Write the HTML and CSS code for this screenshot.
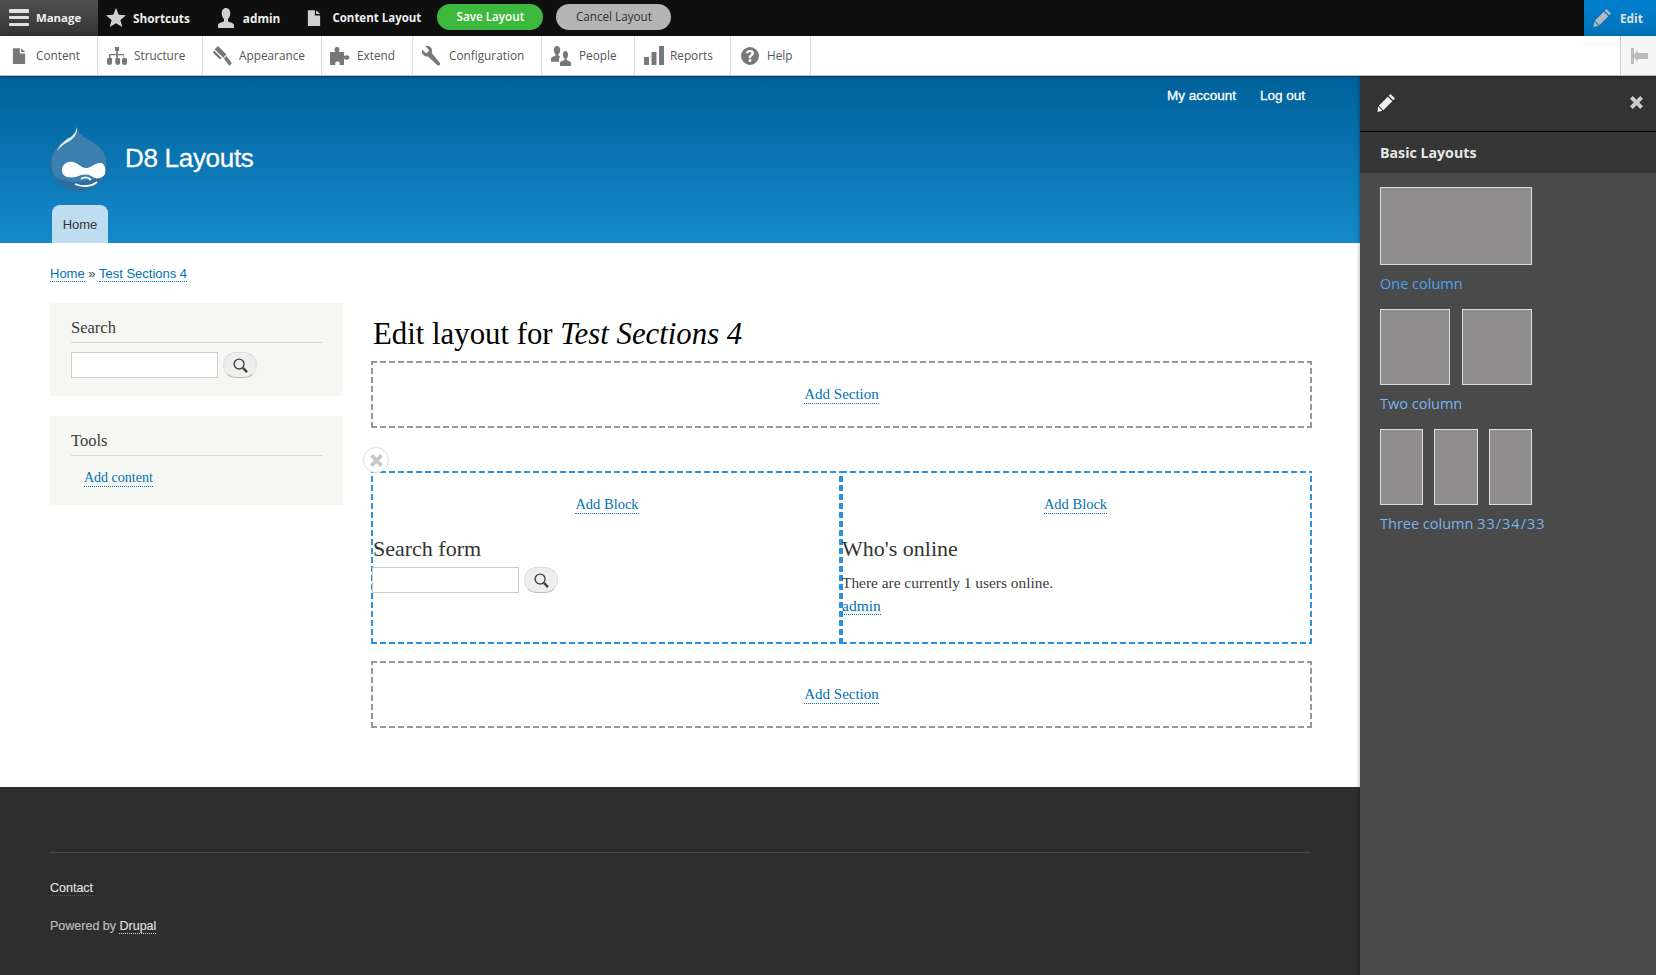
FILE: index.html
```html
<!DOCTYPE html>
<html lang="en">
<head>
<meta charset="utf-8">
<title>Edit layout for Test Sections 4 | D8 Layouts</title>
<link rel="stylesheet" href="styles.css">
</head>
<body>
<svg class="defs" width="0" height="0" aria-hidden="true">
  <symbol id="i-file" viewBox="0 0 16 20"><path d="M1 1h8v6h6v12H1z M10.500 1l4.500 4.500h-4.500z"/></symbol>
  <symbol id="i-star" viewBox="0 0 20 20"><path d="M10 0l2.700 6.800 7.300.5-5.600 4.700 1.800 7.100L10 15.200l-6.200 3.900 1.800-7.100L0 7.300l7.300-.5z"/></symbol>
  <symbol id="i-user" viewBox="0 0 20 20"><path d="M10 0c2.800 0 4.300 2.300 4.300 5.300 0 2.300-.9 4.700-2.300 5.800v1.900c0 1.200 6 1.600 6 4.200V20H2v-2.800c0-2.600 6-3 6-4.200v-1.900C6.600 10 5.700 7.600 5.700 5.300 5.700 2.300 7.200 0 10 0z"/></symbol>
  <symbol id="i-tree" viewBox="0 0 20 20"><path d="M8 1h4v4h-1.200v3H17v4h1.500a1.500 1.500 0 0 1 1.500 1.500v3a2.400 2.400 0 0 1-5 0v-3a1.500 1.500 0 0 1 1.500-1.500V9.300h-5.700V12h1.200a1.500 1.500 0 0 1 1.200 1.500v3a2.400 2.400 0 0 1-4.900 0v-3A1.500 1.500 0 0 1 9.200 12V9.300H3.500V12H5a1.500 1.500 0 0 1 0 1.500v3a2.400 2.400 0 0 1-5 0v-3A1.500 1.500 0 0 1 1.500 12H2V8h7.200V5H8z"/></symbol>
  <symbol id="i-brush" viewBox="0 0 20 20"><path d="M6 0l8.500 8.500-3.300 3.300L2.700 3.300zM2.200 4.600l7.700 7.700-2.200 1L1 6.800zM11.800 12.500l2.700-2.500 5.300 7.300-2.500 2.400z"/></symbol>
  <symbol id="i-puzzle" viewBox="0 0 20 20"><path d="M0 6h5.200C4 3.500 4.500 1 7 1s3 2.500 1.800 5H14v4c2.200-1.200 5.500-1 5.500 1.500S16.200 14.200 14 13v6H9.500c1-2-.2-3.500-2-3.500s-3 1.500-2 3.500H0z"/></symbol>
  <symbol id="i-wrench" viewBox="0 0 20 20"><path d="M5.500 0c-1 0-1.500.2-2 .4l3.300 3.300-.6 2.600-2.500.6L.4 3.600C.2 4.200 0 4.800 0 5.500c0 3 3 5.400 6 5l9.500 8.800c1.300 1.200 3.700-1 2.400-2.400L9.800 7C11 3.500 9 0 5.500 0z"/></symbol>
  <symbol id="i-people" viewBox="0 0 20 20"><path d="M6 0c2.200 0 3.200 1.800 3.200 4 0 1.700-.7 3.300-1.700 4.200v1.300c0 .5 1 .8 2 1.200-.9.6-1.500 1.700-1.500 3v2H0v-3c0-2 4.500-2.300 4.500-3.400V8.200C3.500 7.300 2.800 5.700 2.800 4 2.800 1.800 3.800 0 6 0zM14 5c2.100 0 3.100 1.700 3.100 3.700 0 1.700-.7 3.100-1.600 3.900v1.200c0 .9 4.500 1.200 4.500 3.100V20H9v-3.100c0-1.900 4.500-2.200 4.500-3.100v-1.200c-.9-.8-1.600-2.200-1.600-3.900C11.900 6.700 12.900 5 14 5z"/></symbol>
  <symbol id="i-bars" viewBox="0 0 20 20"><path d="M0 11h5v8H0zM7.500 6h5v13h-5zM15 0h5v19h-5z"/></symbol>
  <symbol id="i-help" viewBox="0 0 20 20"><path fill-rule="evenodd" d="M10 1a9 9 0 1 1 0 18 9 9 0 0 1 0-18zM10 4C7.500 4 6 5.300 6 7.300h2.500c0-.8.500-1.200 1.400-1.200.8 0 1.300.4 1.300 1.100 0 1.500-2.500 1.700-2.500 4.300v.7h2.400v-.5c0-1.600 2.800-2 2.800-4.700C13.900 5.200 12.400 4 10 4zM8.700 13.300v2.500h2.600v-2.500z"/></symbol>
  <symbol id="i-pencil" viewBox="0 0 20 20"><path d="M15 0l5 5-2 2-5-5zM12 3l5 5L7 18l-5-5zM1.300 14l4.700 4.700-5.500 1.300z"/></symbol>
  <symbol id="i-close" viewBox="0 0 14 14"><path d="M3 0l4 4 4-4 3 3-4 4 4 4-3 3-4-4-4 4-3-3 4-4-4-4z"/></symbol>
  <symbol id="i-search" viewBox="0 0 16 16"><path fill="none" stroke="#444" stroke-width="1.500" d="M6.500 1.200a5.300 5.300 0 1 1 0 10.600 5.300 5.300 0 0 1 0-10.600z"/><path fill="none" stroke="#444" stroke-width="2.600" d="M10.500 10.500l4.500 4.500"/></symbol>
</svg>

<nav class="bar-top">
  <a class="top-tab manage"><span class="burger"><i></i><i></i><i></i></span>Manage</a>
  <a class="top-tab t-short"><svg class="ic20"><use href="#i-star"/></svg>Shortcuts</a>
  <a class="top-tab t-admin"><svg class="ic20"><use href="#i-user"/></svg>admin</a>
  <a class="top-tab t-layout"><svg class="ic-file"><use href="#i-file"/></svg>Content Layout</a>
  <button class="pill pill-save">Save Layout</button>
  <button class="pill pill-cancel">Cancel Layout</button>
  <a class="edit-tab"><svg class="ic-edit"><use href="#i-pencil"/></svg>Edit</a>
</nav>
<nav class="bar-sub">
  <a class="sub-tab w-content"><svg class="ic-file"><use href="#i-file"/></svg>Content</a>
  <a class="sub-tab w-structure"><svg class="ic20"><use href="#i-tree"/></svg>Structure</a>
  <a class="sub-tab w-appearance"><svg class="ic20"><use href="#i-brush"/></svg>Appearance</a>
  <a class="sub-tab w-extend"><svg class="ic20"><use href="#i-puzzle"/></svg>Extend</a>
  <a class="sub-tab w-config"><svg class="ic20"><use href="#i-wrench"/></svg>Configuration</a>
  <a class="sub-tab w-people"><svg class="ic20"><use href="#i-people"/></svg>People</a>
  <a class="sub-tab w-reports"><svg class="ic20"><use href="#i-bars"/></svg>Reports</a>
  <a class="sub-tab w-help"><svg class="ic20"><use href="#i-help"/></svg>Help</a>
  <a class="collapse"><span class="c-bar"></span><span class="c-arrow"></span></a>
</nav>

<div class="shell">
  <div class="site">
    <header class="site-head">
      <div class="sec-menu"><a>My account</a><a>Log out</a></div>
      <div class="brand">
        <svg class="logo" viewBox="0 0 58 66">
          <path fill="#3c80b0" stroke="#2a6c9c" d="M27 1C28 10 38 12 47 19 54 24 57 31 57 38 57 54 44 65 28.500 65 13 65 1 54 1 38 1 23 12 16 19 13 23 11 26 7 27 1z"/>
          <path fill="#2a6f9f" d="M4 50C14 58 42 58 54 48 50 58 40 65 28.500 65 18 65 9 59 4 50z"/>
          <path fill="#fff" d="M12 44C12 38 18 35 23 36 28 37 31 42 36 42 41 42 46 36 51 37 55 38 56 43 55 48 53 52 47 54 43 51 39 48 35 48 31 49 25 52 12 54 12 44z"/>
          <path fill="none" stroke="#fff" stroke-width="1.800" d="M25 58C31 61 41 61 47 56M31 53C34 51 38 51 41 54"/>
          <path fill="#fff" opacity=".85" d="M27 1C28 7 24 13 18 16 14 18 10 21 7 25 10 18 15 14 19 12 23 10 26 6 27 1z"/>
        </svg>
        <span class="site-name">D8 Layouts</span>
      </div>
      <div class="tabs"><a class="tab">Home</a></div>
    </header>

    <div class="content-wrap">
      <div class="crumbs"><a class="lnk">Home</a> <span class="sep">»</span> <a class="lnk">Test Sections 4</a></div>
      <div class="columns">
        <aside class="sidebar">
          <section class="block">
            <h2 class="block-title">Search</h2>
            <div class="search-row">
              <input class="search-input" type="text" aria-label="Search">
              <button class="search-btn" aria-label="Search"><svg class="ic-search"><use href="#i-search"/></svg></button>
            </div>
          </section>
          <section class="block block-tools">
            <h2 class="block-title">Tools</h2>
            <a class="lnk-s tool-link">Add content</a>
          </section>
        </aside>
        <main class="main">
          <h1 class="page-title">Edit layout for <em>Test Sections 4</em></h1>
          <div class="add-box dash-gray"><a class="lnk-s">Add Section</a></div>
          <div class="section">
            <span class="remove"><svg class="ic-x"><use href="#i-close"/></svg></span>
            <div class="region dash-blue">
              <div class="add-block"><a class="lnk-s">Add Block</a></div>
              <h2 class="region-title">Search form</h2>
              <div class="search-row search-row-r">
                <input class="search-input" type="text" aria-label="Search">
                <button class="search-btn" aria-label="Search"><svg class="ic-search"><use href="#i-search"/></svg></button>
              </div>
            </div>
            <div class="region region-b dash-blue">
              <div class="add-block"><a class="lnk-s">Add Block</a></div>
              <h2 class="region-title">Who's online</h2>
              <p class="online">There are currently 1 users online.</p>
              <a class="lnk-s online-user">admin</a>
            </div>
          </div>
          <div class="add-box dash-gray"><a class="lnk-s">Add Section</a></div>
        </main>
      </div>
    </div>

    <footer class="site-foot">
      <div class="foot-inner">
        <div class="foot-contact"><a class="foot-link">Contact</a></div>
        <div class="foot-power">Powered by <a class="foot-drupal">Drupal</a></div>
      </div>
    </footer>
  </div>

  <aside class="panel">
    <div class="panel-head">
      <svg class="ic-pen"><use href="#i-pencil"/></svg>
      <svg class="ic-close"><use href="#i-close"/></svg>
    </div>
    <h2 class="panel-title">Basic Layouts</h2>
    <div class="panel-body">
      <a class="layout">
        <span class="thumbs"><i class="c c1"></i></span>
        <span class="lab lab-on">One column</span>
      </a>
      <a class="layout">
        <span class="thumbs t2"><i class="c"></i><i class="c"></i></span>
        <span class="lab">Two column</span>
      </a>
      <a class="layout">
        <span class="thumbs t3"><i class="c"></i><i class="c"></i><i class="c"></i></span>
        <span class="lab">Three column <span class="digits">33/34/33</span></span>
      </a>
    </div>
  </aside>
</div>
</body>
</html>
```
FILE: styles.css
```css
* { box-sizing: border-box; }
html, body { margin: 0; padding: 0; }
body { width: 1656px; height: 975px; overflow: hidden; background: #fff; font-family: "Liberation Serif", serif; color: #3b3b3b; }
.defs { position: absolute; }
svg { display: block; flex: none; }

.bar-top { height: 36px; background: #0f0f0f; display: flex; align-items: center; font: 700 11.800px/34px "Open Sans", sans-serif; color: #eee; }
.top-tab { display: flex; align-items: center; height: 36px; padding-bottom: 1px; }
.top-tab svg { fill: #d0d0d0; }
.manage { width: 98px; background: linear-gradient(#505050, #333); padding-left: 9px; color: #f0f0f0; font-size: 11.400px; }
.burger { display: flex; flex-direction: column; justify-content: space-between; width: 20px; height: 17px; margin-right: 7px; }
.burger i { display: block; height: 3.500px; background: #e0e0e0; border-radius: 1px; }
.ic20 { width: 20px; height: 20px; }
.ic-file { width: 14px; height: 18px; }
.t-short { margin-left: 8px; gap: 7px; }
.t-admin { margin-left: 26px; gap: 7px; }
.t-layout { margin-left: 27px; gap: 11px; font-size: 11.500px; }
.pill { height: 26px; border: 0; border-radius: 13px; font: 11.700px "Open Sans", sans-serif; padding: 0 0 2px; margin-bottom: 2px; }
.pill-save { width: 106px; margin-left: 16px; background: #3dba3d; color: #fff; font-weight: 600; }
.pill-cancel { width: 115px; margin-left: 13px; background: #b4b4b4; color: #333; }
.edit-tab { margin-left: auto; width: 72px; height: 36px; background: linear-gradient(#0080d0, #0072b8); display: flex; align-items: center; gap: 9px; padding-left: 9px; color: #e0e0e0; }
.ic-edit { width: 18px; height: 18px; fill: #b8b8b8; }

.bar-sub { height: 40px; background: #fff; display: flex; font: 11.800px/39px "Open Sans", sans-serif; color: #555; border-bottom: 1px solid #bbb; position: relative; z-index: 2; box-shadow: 0 1px 3px rgba(0,0,0,.35); }
.sub-tab { display: flex; align-items: center; height: 39px; border-right: 1px solid #dcdcdc; }
.sub-tab svg { fill: #787878; }
.w-content { width: 98px; padding-left: 12px; gap: 10px; }
.w-structure { width: 105px; padding-left: 9px; gap: 7px; }
.w-appearance { width: 119px; padding-left: 9px; gap: 7px; }
.w-extend { width: 91px; padding-left: 8px; gap: 7px; }
.w-config { width: 129px; padding-left: 9px; gap: 7px; }
.w-people { width: 93px; padding-left: 9px; gap: 8px; }
.w-reports { width: 96px; padding-left: 9px; gap: 6px; }
.w-help { width: 80px; padding-left: 9px; gap: 7px; }
.collapse { margin-left: auto; width: 36px; height: 39px; background: #f5f5f5; border-left: 1px solid #ccc; display: flex; align-items: center; padding-left: 10px; gap: 3px; }
.c-bar { width: 3px; height: 16px; background: #bbb; }
.c-arrow { width: 11px; height: 6px; background: #bbb; position: relative; }
.c-arrow::before { content: ""; position: absolute; left: -4px; top: -3px; border: 6px solid transparent; border-left: 0; border-right: 5px solid #bbb; }

.shell { display: flex; height: 899px; }
.site { width: 1360px; display: flex; flex-direction: column; }
.site-head { height: 167px; background: linear-gradient(#00619a, #1589cb); padding: 0 52px 0 50px; display: flex; flex-direction: column; }
.sec-menu { display: flex; justify-content: flex-end; gap: 24px; padding-top: 12px; height: 50px; font: 400 13.500px/16px "Liberation Sans", sans-serif; -webkit-text-stroke: .3px #fff; color: #fff; padding-right: 3px; }
.brand { display: flex; align-items: center; gap: 17px; height: 66px; }
.logo { width: 58px; height: 66px; }
.site-name { font: 26px "Liberation Sans", sans-serif; color: #fff; letter-spacing: -.3px; -webkit-text-stroke: .3px #fff; position: relative; top: -1px; }
.tabs { margin-top: 13px; padding-left: 2px; display: flex; }
.tab { width: 56px; height: 38px; background: #c0dcf0; border-radius: 8px 8px 0 0; text-align: center; font: 13px/40px "Liberation Sans", sans-serif; color: #333; }

.content-wrap { flex: 1; padding: 22px 47px 0 50px; }
.crumbs { font: 13px/17px "Liberation Sans", sans-serif; color: #444; }
.sep { font-size: 13px; }
.lnk, .lnk-s, .foot-drupal { color: #0071b3; border-bottom: 1px dotted #0071b3; }
.columns { display: flex; margin-top: 21px; }
.sidebar { width: 293px; margin-right: 28px; flex: none; }
.block { background: #f6f6f2; padding: 14px 21px 0; height: 93px; margin-bottom: 20px; }
.block-tools { height: 89px; }
.block-title { margin: 0; font: 400 16.500px/22px "Liberation Serif", serif; padding-bottom: 3px; border-bottom: 1px solid #d6d6d6; color: #3b3b3b; }
.search-row { display: flex; align-items: center; gap: 5px; margin-top: 9px; }
.search-input { width: 147px; height: 26px; border: 1px solid #ccc; background: #fff; padding: 0; margin: 0; }
.search-btn { width: 34px; height: 26px; border: 1px solid #ddd; border-bottom-color: #bbb; border-radius: 13px; background: #eee; padding: 0; display: flex; align-items: center; justify-content: center; }
.ic-search { width: 15px; height: 15px; }
.tool-link { display: inline-block; margin: 13px 0 0 13px; line-height: 15px; }
.lnk-s { font: 14px/17px "Liberation Serif", serif; display: inline-block; }

.main { width: 941px; flex: none; }
.page-title { margin: 0; font: 400 30.800px/36px "Liberation Serif", serif; color: #000; height: 58px; padding-top: 13px; padding-left: 2px; }
.dash-gray { --dash: #999; }
.dash-blue { --dash: #2a93e0; }
.dash-gray, .dash-blue {
  padding: 2px;
  background:
    repeating-linear-gradient(90deg, var(--dash) 0 6px, transparent 6px 9px) left top / 100% 2px no-repeat,
    repeating-linear-gradient(90deg, var(--dash) 0 6px, transparent 6px 9px) left bottom / 100% 2px no-repeat,
    repeating-linear-gradient(0deg, var(--dash) 0 6px, transparent 6px 9px) left top / 2px 100% no-repeat,
    repeating-linear-gradient(0deg, var(--dash) 0 6px, transparent 6px 9px) right top / 2px 100% no-repeat;
  background-origin: border-box;
}
.add-box { height: 67px; text-align: center; line-height: 61px; }
.add-box .lnk-s { vertical-align: middle; font-size: 15px; }
.section { display: flex; height: 173px; margin: 43px 0 17px; position: relative; }
.remove { position: absolute; left: -8px; top: -24px; width: 26px; height: 26px; border-radius: 50%; background: #fff; border: 1px solid #ddd; display: flex; align-items: center; justify-content: center; z-index: 1; }
.ic-x { width: 13px; height: 13px; fill: #c8c8c8; }
.region { flex: 470 0 0; }
.region-b { flex: 471 0 0; }
.add-block { text-align: center; padding: 22px 0 0 2px; height: 62px; }
.region-b .add-block { padding: 22px 2px 0 0; }
.add-block .lnk-s { font-size: 14.500px; }
.region-title { margin: 0; font: 400 22px/28px "Liberation Serif", serif; color: #333; }
.region-b .region-title, .online, .online-user { margin-left: -1px; }
.search-row-r { margin: 4px 0 0 -1px; }
.online { margin: 11px 0 6px -1px; font: 15.400px/17px "Liberation Serif", serif; color: #3b3b3b; }
.online-user { font-size: 15.500px; }

.site-foot { height: 188px; background: #2e2e2e; padding: 65px 50px 0; }
.foot-inner { width: 1260px; border-top: 1px solid #474747; font: 12.500px/16px "Liberation Sans", sans-serif; color: #bbb; -webkit-text-stroke: .2px; }
.foot-contact { padding-top: 27px; color: #ddd; }
.foot-link { border-bottom: 1px dotted #555; }
.foot-power { margin-top: 22px; }
.foot-drupal { color: #ddd; border-bottom-color: #ddd; }

.panel { width: 296px; background: #4a4a4a; position: relative; z-index: 1; box-shadow: -1px 0 3px rgba(0,0,0,.25); }
.panel-head { height: 56px; background: #333; border-bottom: 1px solid #000; display: flex; align-items: center; justify-content: space-between; padding: 0 13px 2px 17px; }
.ic-pen { width: 18px; height: 18px; fill: #f0f0f0; }
.ic-close { width: 13px; height: 13px; fill: #ccc; }
.panel-title { margin: 0; height: 41px; background: #363636; padding-left: 20px; font: 700 14.200px/42px "Open Sans", sans-serif; color: #e6e6e6; }
.panel-body { padding: 14px 20px 0; }
.layout { display: block; width: 180px; margin-bottom: 15px; }
.thumbs { display: flex; gap: 12px; width: 152px; height: 76px; }
.layout:first-child .thumbs { height: 78px; }
.c { display: block; flex: 1; background: #8e8c8c; border: 1px solid #ddd; }
.t3 { gap: 11px; }
.lab { display: block; font: 500 14.500px/21px "Open Sans", sans-serif; color: #78b4ec; margin-top: 8px; white-space: nowrap; }
.lab-on { color: #4aa2f2; }
.digits { letter-spacing: 1px; }
```
